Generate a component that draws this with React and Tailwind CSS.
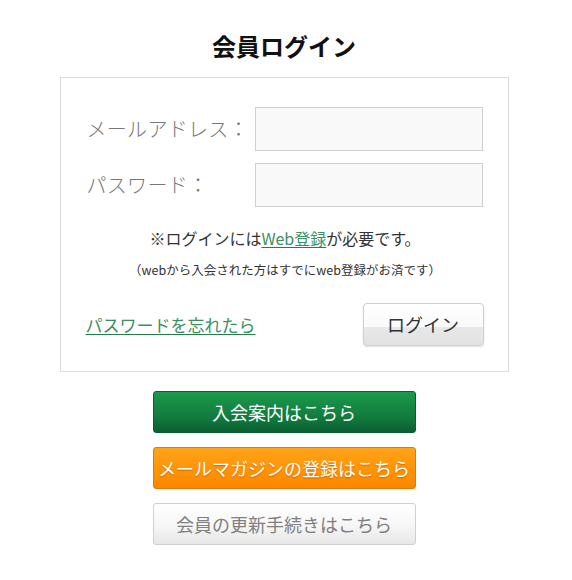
import { useState } from "react";

const jp = { fontFamily: '"Noto Sans CJK JP", "Noto Sans", sans-serif' };

// 入力欄の一行
const Field = ({ label, type, value, onChange }) => (
  <div className="flex items-center h-[44px]">
    <label className="w-[168px] text-[20px] font-light text-[#777] leading-none whitespace-nowrap tracking-[0.3px]">{label}</label>
    <input
      type={type}
      value={value}
      onChange={(e) => onChange(e.target.value)}
      className="w-[228px] h-[44px] bg-[#f9f9f9] border border-[#cfcfcf] outline-none px-2 text-[16px]"
    />
  </div>
);

export default function App() {
  const [email, setEmail] = useState("");
  const [pass, setPass] = useState("");

  return (
    <div className="w-[568px] bg-white flex flex-col items-center pb-[34px]" style={jp}>
      <h1 className="mt-[30px] text-[24px] font-bold text-[#111] leading-[32px]">会員ログイン</h1>

      <div className="mt-[15px] w-[449px] border border-[#dcdcdc] pl-[26px] pr-[24px] pt-[29px] pb-[25px]">
        <div className="flex flex-col gap-[12px]">
          <Field label="メールアドレス：" type="text" value={email} onChange={setEmail} />
          <Field label="パスワード：" type="password" value={pass} onChange={setPass} />
        </div>

        <p className="mt-[20px] text-center text-[16px] text-[#333] leading-[22px]">
          ※ログインには
          <a href="#" className="text-[#3d8f63] underline underline-offset-2 decoration-[#2a7a50]">Web登録</a>
          が必要です。
        </p>
        <p className="mt-[12px] text-center text-[12.5px] text-[#333] leading-[18px]">
          （webから入会された方はすでにweb登録がお済です）
        </p>

        <div className="mt-[24px] flex items-center justify-between">
          <a href="#" className="-ml-[1px] text-[17px] text-[#3d8f63] underline underline-offset-2 decoration-[#2a7a50] leading-none">
            パスワードを忘れたら
          </a>
          <button className="w-[121px] h-[43px] rounded-[4px] border border-[#cfcfcf] bg-[linear-gradient(#ffffff_0%,#fafafa_55%,#e8e8e8_56%,#e2e2e2_100%)] text-[18px] text-[#333] shadow-[0_1px_2px_rgba(0,0,0,0.12)]">
            ログイン
          </button>
        </div>
      </div>

      <div className="mt-[19px] flex flex-col gap-[14px]">
        <button className="w-[263px] h-[42px] rounded-[3px] border border-[#0c5c31] bg-[linear-gradient(#1c9a4c,#117a3e_65%,#0a5f31)] text-white text-[18px] whitespace-nowrap">
          入会案内はこちら
        </button>
        <button className="w-[263px] h-[42px] rounded-[3px] border border-[#e07a00] bg-[linear-gradient(#ffa41a,#ff9205_60%,#fb8600)] text-white text-[18px] whitespace-nowrap [text-shadow:0_1px_1px_rgba(150,70,0,0.5)]">
          メールマガジンの登録はこちら
        </button>
        <button className="w-[263px] h-[42px] rounded-[3px] border border-[#d0d0d0] bg-[linear-gradient(#ffffff,#f6f6f6_55%,#e6e6e6)] text-[#808080] text-[18px] whitespace-nowrap">
          会員の更新手続きはこちら
        </button>
      </div>
    </div>
  );
}
